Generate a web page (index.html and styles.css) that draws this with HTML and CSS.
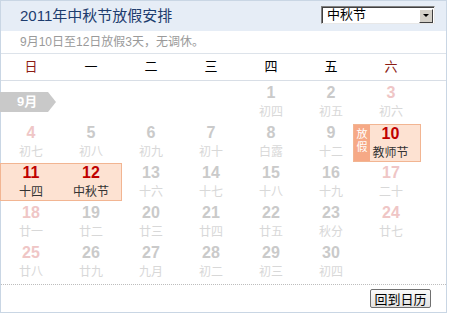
FILE: index.html
```html
<!DOCTYPE html>
<html lang="zh-CN">
<head>
<meta charset="utf-8">
<title>2011年中秋节放假安排</title>
<link rel="stylesheet" href="styles.css">
</head>
<body>
<div class="cal">
  <div class="head">
    <h1 class="title">2011年中秋节放假安排</h1>
    <div class="select"><span class="sel-text">中秋节</span><span class="sel-btn"><svg width="6" height="3" viewBox="0 0 6 3"><path d="M0 0H6L3 3Z" fill="#000"/></svg></span></div>
  </div>
  <div class="note">9月10日至12日放假3天，无调休。</div>
  <div class="week">
    <span class="wk red">日</span><span class="wk">一</span><span class="wk">二</span><span class="wk">三</span><span class="wk">四</span><span class="wk">五</span><span class="wk red">六</span>
  </div>
  <div class="days">
    <div class="mon">9月</div>
    <div class="d"><div class="n">1</div><div class="l">初四</div></div>
    <div class="d"><div class="n">2</div><div class="l">初五</div></div>
    <div class="d we"><div class="n">3</div><div class="l">初六</div></div>

    <div class="d we"><div class="n">4</div><div class="l">初七</div></div>
    <div class="d"><div class="n">5</div><div class="l">初八</div></div>
    <div class="d"><div class="n">6</div><div class="l">初九</div></div>
    <div class="d"><div class="n">7</div><div class="l">初十</div></div>
    <div class="d"><div class="n">8</div><div class="l">白露</div></div>
    <div class="d"><div class="n">9</div><div class="l">十二</div></div>
    <div class="hol-one">
      <div class="badge"><span class="badge-text">放假</span></div>
      <div class="hd"><div class="n">10</div><div class="l">教师节</div></div>
    </div>

    <div class="hol-two">
      <div class="hd"><div class="n">11</div><div class="l">十四</div></div>
      <div class="hd"><div class="n">12</div><div class="l">中秋节</div></div>
    </div>
    <div class="d"><div class="n">13</div><div class="l">十六</div></div>
    <div class="d"><div class="n">14</div><div class="l">十七</div></div>
    <div class="d"><div class="n">15</div><div class="l">十八</div></div>
    <div class="d"><div class="n">16</div><div class="l">十九</div></div>
    <div class="d we"><div class="n">17</div><div class="l">二十</div></div>

    <div class="d we"><div class="n">18</div><div class="l">廿一</div></div>
    <div class="d"><div class="n">19</div><div class="l">廿二</div></div>
    <div class="d"><div class="n">20</div><div class="l">廿三</div></div>
    <div class="d"><div class="n">21</div><div class="l">廿四</div></div>
    <div class="d"><div class="n">22</div><div class="l">廿五</div></div>
    <div class="d"><div class="n">23</div><div class="l">秋分</div></div>
    <div class="d we"><div class="n">24</div><div class="l">廿七</div></div>

    <div class="d we"><div class="n">25</div><div class="l">廿八</div></div>
    <div class="d"><div class="n">26</div><div class="l">廿九</div></div>
    <div class="d"><div class="n">27</div><div class="l">九月</div></div>
    <div class="d"><div class="n">28</div><div class="l">初二</div></div>
    <div class="d"><div class="n">29</div><div class="l">初三</div></div>
    <div class="d"><div class="n">30</div><div class="l">初四</div></div>
  </div>
  <div class="foot"><button class="back" type="button">回到日历</button></div>
</div>
</body>
</html>
```

FILE: styles.css
```css
* { box-sizing: border-box; }
body {
  margin: 0;
  background: #fff;
  font-family: "Liberation Sans", "Noto Sans CJK SC", sans-serif;
}
.cal {
  width: 447px;
  height: 313px;
  border: 1px solid #c9d6e4;
  display: flex;
  flex-direction: column;
  font-family: "Liberation Sans", "Noto Sans CJK SC", sans-serif;
}
.head {
  height: 30px;
  background: #e6edf6;
  display: flex;
  justify-content: space-between;
  align-items: flex-start;
  padding: 0 11px 0 19px;
}
.title {
  margin: 0;
  font-size: 15px;
  font-weight: normal;
  line-height: 30px;
  color: #1d3c6e;
}
.select {
  margin-top: 5px;
  width: 114px;
  height: 18px;
  background: #fff;
  border-top: 1px solid #808080;
  border-left: 1px solid #808080;
  border-right: 1px solid #e8e8e8;
  border-bottom: 1px solid #e8e8e8;
  box-shadow: inset 1px 1px 0 #404040;
  display: flex;
  align-items: center;
  justify-content: space-between;
  padding: 0 1px 0 5px;
}
.sel-text {
  font-size: 13px;
  line-height: 16px;
  color: #000;
}
.sel-btn {
  width: 14px;
  height: 14px;
  margin-top: 1px;
  background: #d4d0c8;
  border-top: 1px solid #fff;
  border-left: 1px solid #fff;
  border-right: 1px solid #404040;
  border-bottom: 1px solid #404040;
  display: flex;
  align-items: center;
  justify-content: center;
}
.note {
  height: 23px;
  border-bottom: 1px solid #dde3ea;
  padding-left: 19px;
  font-size: 12px;
  line-height: 22px;
  color: #9a9a9a;
}
.week {
  height: 27px;
  border-bottom: 1px solid #d8dee6;
  display: grid;
  grid-template-columns: repeat(7, 60px);
}
.wk {
  text-align: center;
  font-size: 13px;
  line-height: 26px;
  color: #000;
}
.wk.red { color: #8c1c13; }
.days {
  display: grid;
  grid-template-columns: repeat(7, 60px);
  grid-auto-rows: 40px;
  padding: 2px 0 1px;
  height: 203px;
}
.mon {
  grid-column: 1 / 5;
  justify-self: start;
  align-self: start;
  margin-top: 9px;
  margin-left: -1px;
  width: 56px;
  height: 20px;
  background: #c9c9c9;
  clip-path: polygon(0 0, 48px 0, 56px 10px, 48px 20px, 0 20px);
  color: #fff;
  font-weight: bold;
  font-size: 13px;
  line-height: 20px;
  padding-left: 17px;
}
.d, .hd {
  text-align: center;
}
.n {
  font-family: "Liberation Sans", sans-serif;
  font-weight: bold;
  font-size: 16px;
  line-height: 18px;
  padding-top: 1px;
  color: #cacaca;
}
.l {
  font-size: 12px;
  line-height: 18px;
  color: #d8d8d8;
  font-family: "Noto Sans CJK SC", sans-serif;
}
.we .n { color: #efc6c6; }
.hol-one, .hol-two {
  background: #fde2d2;
  border: 1px solid #f2b592;
  height: 38px;
  margin-top: 1px;
  display: flex;
}
.hol-one {
  margin-left: -8px;
  width: 68px;
}
.hol-two {
  grid-column: 1 / 3;
  margin-top: 0;
  margin-left: -1px;
  width: 122px;
}
.hol-two .hd { width: 60px; margin-top: -1px; }
.hol-one .hd { flex: 1; padding-right: 9px; margin-top: -1px; }
.hd .n { color: #c00000; }
.hd .l { color: #333; }
.badge {
  width: 16px;
  flex: none;
  background: #f6a986;
  display: flex;
  justify-content: center;
  padding-top: 3px;
}
.badge-text {
  writing-mode: vertical-rl;
  color: #fff;
  font-size: 11px;
  line-height: 16px;
  letter-spacing: 2px;
  font-family: "Noto Sans CJK SC", sans-serif;
}
.foot {
  border-top: 1px dotted #bdbdbd;
  flex: 1;
  display: flex;
  justify-content: flex-end;
  align-items: center;
  padding-right: 15px;
}
.back {
  width: 61px;
  height: 19px;
  padding: 0;
  border: 1px solid #707070;
  border-radius: 2px;
  background: linear-gradient(#fafafa, #e2e2e2);
  font-family: "Noto Sans CJK SC", sans-serif;
  font-size: 13px;
  line-height: 17px;
  color: #000;
}
```
